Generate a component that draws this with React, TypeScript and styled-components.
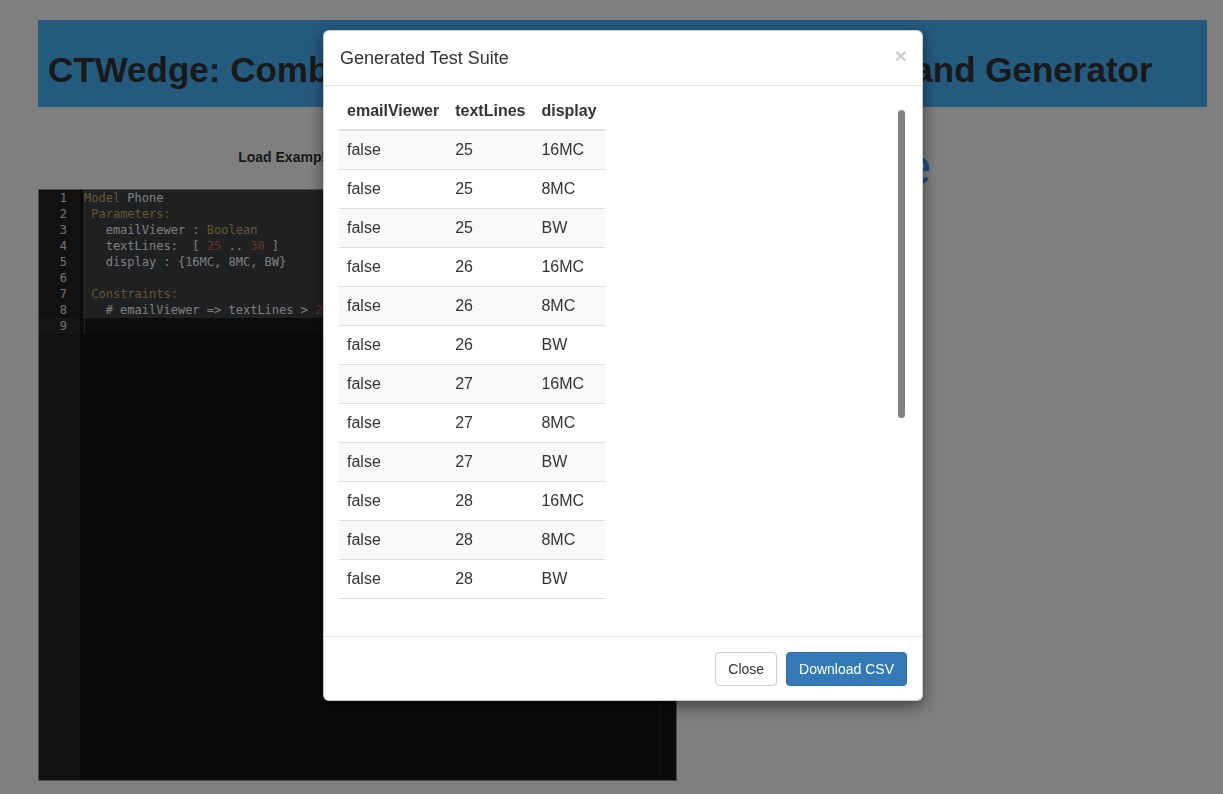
import React from "react";
import styled, { createGlobalStyle } from "styled-components";

const GlobalStyle = createGlobalStyle`
  *, *::before, *::after { box-sizing: border-box; }
  html, body {
    margin: 0;
    padding: 0;
    background: #ffffff;
    color: #333333;
    font-family: "Liberation Sans", Arial, Helvetica, sans-serif;
    font-size: 14px;
    overflow: hidden;
  }
`;

const Page = styled.div`
  padding: 20px 16px 0 38px;
  min-height: 794px;
`;

const Banner = styled.header`
  background: #4ab4fe;
  padding: 30px 10px 17px;
`;

const BannerTitle = styled.h1`
  margin: 0;
  font-size: 35px;
  line-height: 40px;
  font-weight: bold;
  color: #333333;
  white-space: nowrap;
`;

const Main = styled.div`
  display: flex;
  align-items: flex-start;
`;

const EditorColumn = styled.section`
  width: 639px;
  padding-top: 40px;
  display: flex;
  flex-direction: column;
  gap: 22px;
`;

const ExampleBar = styled.div`
  height: 20px;
  display: flex;
  justify-content: center;
  align-items: center;
  gap: 8px;
`;

const ExampleLabel = styled.label`
  font-weight: bold;
  font-size: 14px;
  line-height: 20px;
`;

const ExampleSelect = styled.select`
  width: 131px;
  height: 20px;
  font-size: 13px;
`;

const Editor = styled.div`
  height: 592px;
  border: 1px solid #999999;
  display: flex;
  font-family: "DejaVu Sans Mono", "Liberation Mono", monospace;
  font-size: 12px;
  line-height: 16px;
`;

const Gutter = styled.div`
  width: 41px;
  background: #232323;
  color: #e2e2e2;
`;

const GutterCell = styled.div<{ $active?: boolean }>`
  height: 16px;
  text-align: right;
  padding-right: 13px;
  background: ${(p) => (p.$active ? "rgba(255,255,255,0.04)" : "transparent")};
`;

const Code = styled.div`
  flex: 1;
  position: relative;
  background: #141414;
  color: #f8f8f8;
  padding-left: 3px;
`;

const PrintMargin = styled.div`
  position: absolute;
  top: 0;
  bottom: 0;
  left: 580px;
  width: 1px;
  background: #232323;
`;

const CodeLine = styled.div<{ $selected?: boolean; $active?: boolean }>`
  height: 16px;
  white-space: pre;
  padding-left: 1px;
  background: ${(p) =>
    p.$selected
      ? "rgba(221,240,255,0.2)"
      : p.$active
      ? "rgba(255,255,255,0.031)"
      : "transparent"};
`;

const Kw = styled.span`
  color: #cda869;
`;

const Num = styled.span`
  color: #cf6a4c;
`;

const Cursor = styled.span`
  display: inline-block;
  width: 1px;
  height: 16px;
  vertical-align: top;
  background: #4a4a4a;
`;

const Side = styled.section`
  padding: 31px 0 0 39px;
`;

const SideHeading = styled.h2`
  margin: 0;
  font-size: 52px;
  line-height: 1.1;
  font-weight: 300;
  color: #3aa0ff;
  white-space: nowrap;
`;

const Backdrop = styled.div`
  position: fixed;
  inset: 0;
  z-index: 10;
  background: rgba(0, 0, 0, 0.5);
`;

const Dialog = styled.div`
  position: fixed;
  z-index: 11;
  top: 30px;
  left: 323px;
  width: 600px;
  background: #ffffff;
  border: 1px solid rgba(0, 0, 0, 0.2);
  border-radius: 6px;
  box-shadow: 0 5px 15px rgba(0, 0, 0, 0.5);
  display: flex;
  flex-direction: column;
`;

const DialogHeader = styled.div`
  display: flex;
  justify-content: space-between;
  align-items: center;
  padding: 15px 15px 15px 16px;
  border-bottom: 1px solid #e5e5e5;
`;

const DialogTitle = styled.h4`
  margin: 0;
  font-size: 18px;
  line-height: 24px;
  font-weight: 500;
  color: #333333;
`;

const CloseX = styled.button`
  border: 0;
  background: transparent;
  padding: 0;
  margin-top: -5px;
  font-family: "Liberation Sans", Arial, sans-serif;
  font-size: 21px;
  font-weight: bold;
  line-height: 1;
  color: #000;
  opacity: 0.2;
`;

const DialogBody = styled.div`
  padding: 6px 15px 37px;
`;

const ScrollArea = styled.div`
  position: relative;
  height: 507px;
  overflow: hidden;
`;

const ScrollThumb = styled.div`
  position: absolute;
  top: 18px;
  right: 2px;
  width: 7px;
  height: 308px;
  border-radius: 4px;
  background: rgba(0, 0, 0, 0.5);
`;

const SuiteTable = styled.table`
  border-collapse: collapse;
  border-spacing: 0;
  font-size: 16px;
  line-height: 22px;
  color: #333333;
`;

const HeadCell = styled.th`
  text-align: left;
  vertical-align: bottom;
  font-weight: bold;
  padding: 8px 8px 7px;
  border-bottom: 2px solid #dddddd;
  white-space: nowrap;
`;

const BodyRow = styled.tr<{ $striped: boolean }>`
  background: ${(p) => (p.$striped ? "#f9f9f9" : "#ffffff")};
`;

const BodyCell = styled.td`
  padding: 8px;
  border-top: 1px solid #dddddd;
  white-space: nowrap;
`;

const DialogFooter = styled.div`
  display: flex;
  justify-content: flex-end;
  gap: 9px;
  padding: 15px 15px 14px;
  border-top: 1px solid #e5e5e5;
`;

const Button = styled.button<{ $primary?: boolean }>`
  font-family: "Liberation Sans", Arial, sans-serif;
  font-size: 14px;
  line-height: 20px;
  padding: 6px 12px;
  border-radius: 4px;
  border: 1px solid ${(p) => (p.$primary ? "#2e6da4" : "#cccccc")};
  background: ${(p) => (p.$primary ? "#337ab7" : "#ffffff")};
  color: ${(p) => (p.$primary ? "#ffffff" : "#333333")};
`;

const displays = ["16MC", "8MC", "BW"];
const rows: string[][] = [];
["25", "26", "27", "28", "29", "30"].forEach((n) =>
  displays.forEach((d) => rows.push(["false", n, d]))
);
["25", "26", "27"].forEach((n) => rows.push(["true", n, "16MC"]));

const lineNumbers = [1, 2, 3, 4, 5, 6, 7, 8, 9];

export default function App() {
  return (
    <>
      <GlobalStyle />
      <Page>
        <Banner>
          <BannerTitle>
            CTWedge: Combinatorial Testing Web-based Editor and Generator
          </BannerTitle>
        </Banner>
        <Main>
          <EditorColumn>
            <ExampleBar>
              <ExampleLabel>Load Example:</ExampleLabel>
              <ExampleSelect defaultValue="phone">
                <option value="phone">Phone</option>
              </ExampleSelect>
            </ExampleBar>
            <Editor>
              <Gutter>
                {lineNumbers.map((n) => (
                  <GutterCell key={n} $active={n === 9}>
                    {n}
                  </GutterCell>
                ))}
              </Gutter>
              <Code>
                <PrintMargin />
                <CodeLine $selected>
                  <Kw>Model</Kw> Phone
                </CodeLine>
                <CodeLine $selected>
                  {" "}
                  <Kw>Parameters:</Kw>
                </CodeLine>
                <CodeLine $selected>
                  {"   emailViewer : "}
                  <Kw>Boolean</Kw>
                </CodeLine>
                <CodeLine $selected>
                  {"   textLines:  [ "}
                  <Num>25</Num>
                  {" .. "}
                  <Num>30</Num>
                  {" ]"}
                </CodeLine>
                <CodeLine $selected>{"   display : {16MC, 8MC, BW}"}</CodeLine>
                <CodeLine $selected>{" "}</CodeLine>
                <CodeLine $selected>
                  {" "}
                  <Kw>Constraints:</Kw>
                </CodeLine>
                <CodeLine $selected>
                  {"   # emailViewer => textLines > "}
                  <Num>28</Num>
                  {" #"}
                </CodeLine>
                <CodeLine $active>
                  <Cursor />
                </CodeLine>
              </Code>
            </Editor>
          </EditorColumn>
          <Side>
            <SideHeading>Welcome</SideHeading>
          </Side>
        </Main>
      </Page>
      <Backdrop />
      <Dialog role="dialog">
        <DialogHeader>
          <DialogTitle>Generated Test Suite</DialogTitle>
          <CloseX aria-label="Close">×</CloseX>
        </DialogHeader>
        <DialogBody>
          <ScrollArea>
            <SuiteTable>
              <thead>
                <tr>
                  <HeadCell>emailViewer</HeadCell>
                  <HeadCell>textLines</HeadCell>
                  <HeadCell>display</HeadCell>
                </tr>
              </thead>
              <tbody>
                {rows.map((r, i) => (
                  <BodyRow key={i} $striped={i % 2 === 0}>
                    {r.map((c, j) => (
                      <BodyCell key={j}>{c}</BodyCell>
                    ))}
                  </BodyRow>
                ))}
              </tbody>
            </SuiteTable>
            <ScrollThumb />
          </ScrollArea>
        </DialogBody>
        <DialogFooter>
          <Button>Close</Button>
          <Button $primary>Download CSV</Button>
        </DialogFooter>
      </Dialog>
    </>
  );
}
